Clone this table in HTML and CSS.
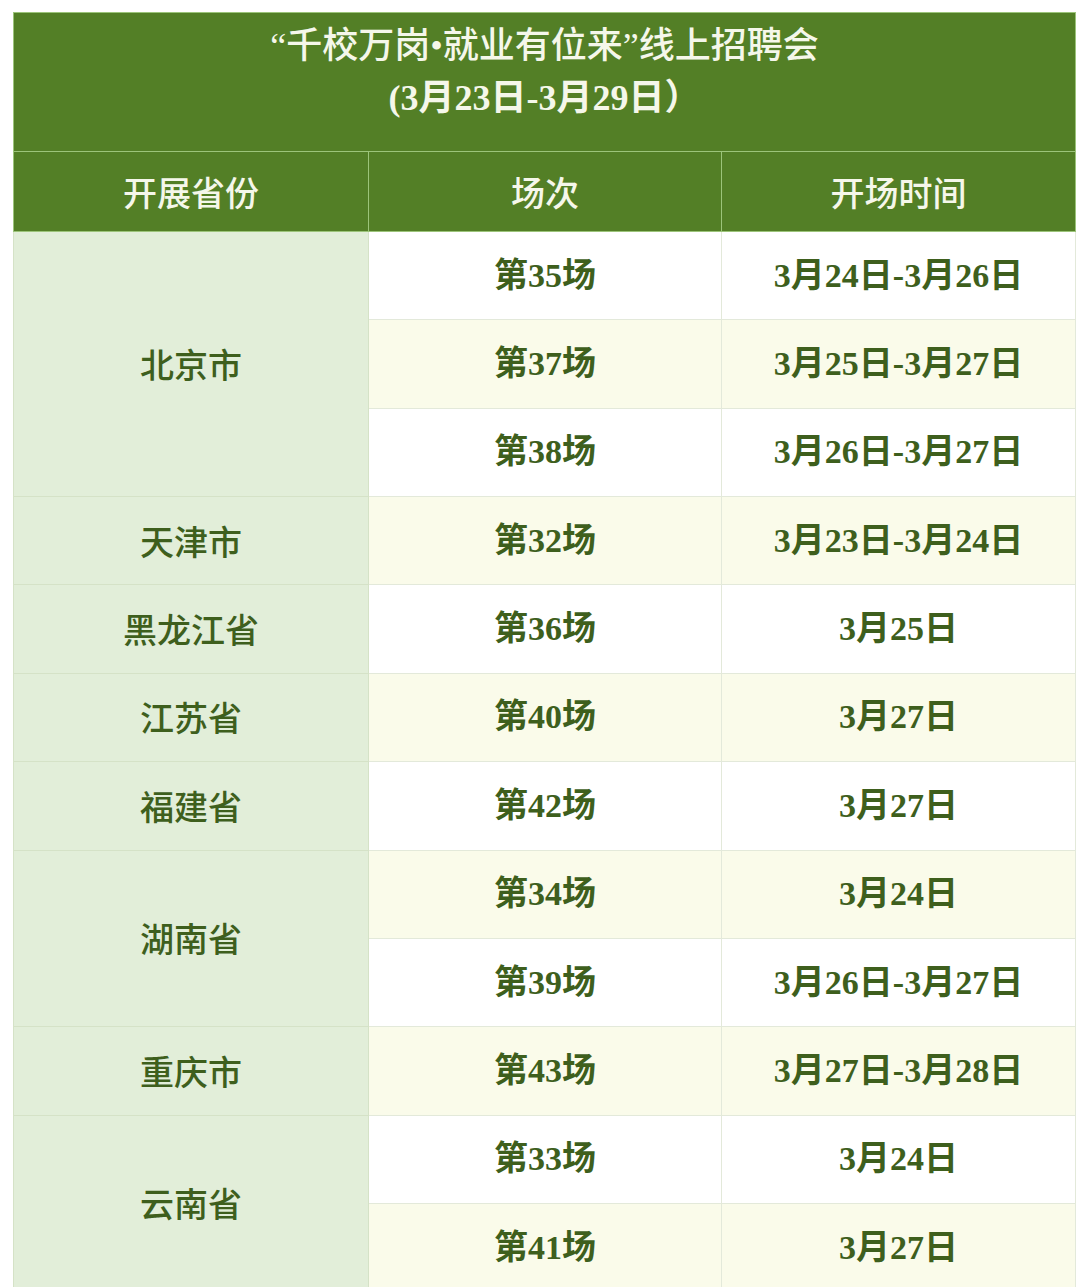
FILE: index.html
```html
<!DOCTYPE html>
<html lang="zh-CN">
<head>
<meta charset="utf-8">
<title>千校万岗·就业有位来 线上招聘会</title>
<link rel="stylesheet" href="styles.css">
</head>
<body>
<table class="schedule">
  <colgroup>
    <col class="col-prov">
    <col class="col-session">
    <col class="col-time">
  </colgroup>
  <thead>
    <tr class="title-row">
      <th colspan="3" class="title">
        <div class="title-line">“千校万岗•就业有位来”线上招聘会</div>
        <div class="title-line dates">(3月23日-3月29日）</div>
      </th>
    </tr>
    <tr class="head-row">
      <th>开展省份</th>
      <th>场次</th>
      <th>开场时间</th>
    </tr>
  </thead>
  <tbody>
    <tr class="row">
      <td class="prov" rowspan="3">北京市</td>
      <td class="cell">第35场</td>
      <td class="cell">3月24日-3月26日</td>
    </tr>
    <tr class="row alt">
      <td class="cell">第37场</td>
      <td class="cell">3月25日-3月27日</td>
    </tr>
    <tr class="row">
      <td class="cell">第38场</td>
      <td class="cell">3月26日-3月27日</td>
    </tr>
    <tr class="row alt">
      <td class="prov">天津市</td>
      <td class="cell">第32场</td>
      <td class="cell">3月23日-3月24日</td>
    </tr>
    <tr class="row">
      <td class="prov">黑龙江省</td>
      <td class="cell">第36场</td>
      <td class="cell">3月25日</td>
    </tr>
    <tr class="row alt">
      <td class="prov">江苏省</td>
      <td class="cell">第40场</td>
      <td class="cell">3月27日</td>
    </tr>
    <tr class="row">
      <td class="prov">福建省</td>
      <td class="cell">第42场</td>
      <td class="cell">3月27日</td>
    </tr>
    <tr class="row alt">
      <td class="prov" rowspan="2">湖南省</td>
      <td class="cell">第34场</td>
      <td class="cell">3月24日</td>
    </tr>
    <tr class="row">
      <td class="cell">第39场</td>
      <td class="cell">3月26日-3月27日</td>
    </tr>
    <tr class="row alt">
      <td class="prov">重庆市</td>
      <td class="cell">第43场</td>
      <td class="cell">3月27日-3月28日</td>
    </tr>
    <tr class="row">
      <td class="prov" rowspan="2">云南省</td>
      <td class="cell">第33场</td>
      <td class="cell">3月24日</td>
    </tr>
    <tr class="row alt">
      <td class="cell">第41场</td>
      <td class="cell">3月27日</td>
    </tr>
  </tbody>
</table>
</body>
</html>
```

FILE: styles.css
```css
html, body {
  margin: 0;
  padding: 0;
  background: #ffffff;
}

body {
  padding: 12px 0 0 13px;
  font-family: "Noto Sans CJK SC", sans-serif;
}

.schedule {
  width: 1062px;
  border-collapse: collapse;
  table-layout: fixed;
}

.col-prov { width: 355px; }
.col-session { width: 353px; }
.col-time { width: 354px; }

.title-row th,
.head-row th {
  background: #537f26;
  color: #f5f7ea;
  border: 1px solid #9cc47a;
  box-sizing: border-box;
}

.title {
  height: 139px;
  vertical-align: top;
  padding: 7px 0 0 0;
  font-family: "Liberation Serif", "Noto Sans CJK SC", serif;
  font-size: 36px;
  font-weight: 500;
  line-height: 52px;
}

.title-line {
  text-align: center;
}

.title-line.dates {
  font-weight: 700;
}

.head-row th {
  height: 80px;
  padding: 0;
  font-size: 34px;
  font-weight: 500;
  line-height: 40px;
  vertical-align: middle;
}

.row {
  height: 88.36px;
  background: #ffffff;
}

.row.alt {
  background: #fafbea;
}

.row td {
  padding: 0;
  text-align: center;
  vertical-align: middle;
  color: #3e5f1d;
  line-height: 40px;
  border: 1px solid #e3e9da;
}

.prov {
  background: #e2eed9;
  font-size: 34px;
  font-weight: 500;
  border-color: #d5e2c7 !important;
}

.cell {
  font-family: "Liberation Serif", "Noto Sans CJK SC", serif;
  font-size: 34px;
  font-weight: 700;
}
```
